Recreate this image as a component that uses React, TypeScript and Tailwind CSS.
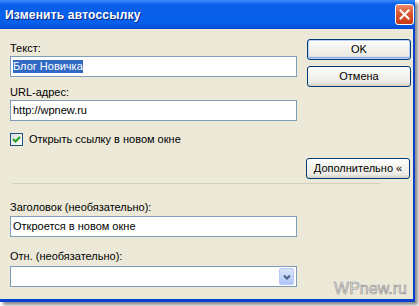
import React from "react"

const btn =
  "flex h-[21px] w-[104px] items-center justify-center rounded-[3px] border border-[#003c74] bg-[linear-gradient(180deg,#ffffff_0%,#f4f3ee_40%,#ecebe6_80%,#d6d0c5_100%)] text-[11px] text-black"

function Field({ children }: { children?: React.ReactNode }) {
  return (
    <div className="flex h-[21px] w-[287px] items-center border border-[#7f9db9] bg-white pl-[2px] text-[11px] text-black">
      {children}
    </div>
  )
}

export default function App() {
  return (
    <div className="h-[306px] w-[419px] bg-white font-['Liberation_Sans',Arial,sans-serif]">
      <div className="flex h-[302px] w-[415px] flex-col shadow-[3px_3px_3px_rgba(0,0,0,0.45)]">
        {/* title bar */}
        <div className="flex h-[29px] items-center justify-between bg-[linear-gradient(180deg,#3b8df9_0%,#0a5ee9_16%,#0760ea_80%,#0349d6_100%)] pl-[5px] pr-[1px]">
          <span className="text-[12px] font-bold tracking-[0.2px] text-white [text-shadow:1px_1px_0_#0a2a8a]">
            Изменить автоссылку
          </span>
          <div className="flex h-[21px] w-[19px] items-center justify-center rounded-[3px] border border-white bg-[linear-gradient(180deg,#e98a68_0%,#dc5531_45%,#c63b17_100%)]">
            <svg width="11" height="11" viewBox="0 0 11 11">
              <path d="M1.5 1.5 L9.5 9.5 M9.5 1.5 L1.5 9.5" stroke="white" strokeWidth="2" strokeLinecap="square" />
            </svg>
          </div>
        </div>

        {/* body */}
        <div className="relative flex flex-1 flex-col border-b-[3px] border-r-[2px] border-[#0b3fcf] bg-[#ece9d8] pl-[10px] text-[11px] leading-[13px] text-black">
          <div className="flex items-start">
            <div className="flex w-[287px] flex-col pt-[13px]">
              <span>Текст:</span>
              <div className="mt-[1px]">
                <Field>
                  <span className="bg-[#316ac5] text-white">Блог Новичка</span>
                </Field>
              </div>
              <span className="mt-[9px]">URL-адрес:</span>
              <div className="mt-[1px]">
                <Field>http://wpnew.ru</Field>
              </div>
              <div className="mt-[12px] flex items-center gap-[6px]">
                <div className="flex h-[13px] w-[13px] items-center justify-center border border-[#1c5180] bg-[linear-gradient(135deg,#dcdcd7,#ffffff)]">
                  <svg width="9" height="9" viewBox="0 0 9 9">
                    <path d="M1 4 L3.5 6.5 L8 2" stroke="#21a121" strokeWidth="2" fill="none" />
                  </svg>
                </div>
                <span>Открыть ссылку в новом окне</span>
              </div>
            </div>
            <div className="ml-[10px] flex flex-col gap-[6px] pt-[10px]">
              <div className={btn + " shadow-[inset_0_0_0_1px_#b9d1fa,inset_0_-1px_0_1px_#89adf0]"}>OK</div>
              <div className={btn}>Отмена</div>
            </div>
          </div>

          <div className="mt-[12px] flex justify-end pr-[3px]">
            <div className={btn}>Дополнительно «</div>
          </div>

          <div className="ml-[2px] mt-[4px] h-[2px] w-[369px] border-t border-[#d0d0bf] border-b-white" />

          <span className="mt-[16px]">Заголовок (необязательно):</span>
          <div className="mt-[2px]">
            <Field>Откроется в новом окне</Field>
          </div>
          <span className="mt-[13px]">Отн. (необязательно):</span>
          <div className="mt-[3px] flex h-[21px] w-[287px] items-center justify-end border border-[#7f9db9] bg-white pr-[2px]">
            <div className="flex h-[17px] w-[15px] items-center justify-center rounded-[2px] border border-[#b8caf5] bg-[linear-gradient(180deg,#d8e4fd_0%,#c1d3fb_60%,#b0c6f7_100%)]">
              <svg width="8" height="6" viewBox="0 0 8 6">
                <path d="M1 1.5 L4 4.5 L7 1.5" stroke="#4d6185" strokeWidth="2" fill="none" />
              </svg>
            </div>
          </div>

          <span className="absolute bottom-[1px] right-[6px] text-[16px] leading-[18px] text-[#ececec] [-webkit-text-stroke:0.6px_#8c8c8c]">
            WPnew.ru
          </span>
        </div>
      </div>
    </div>
  )
}
